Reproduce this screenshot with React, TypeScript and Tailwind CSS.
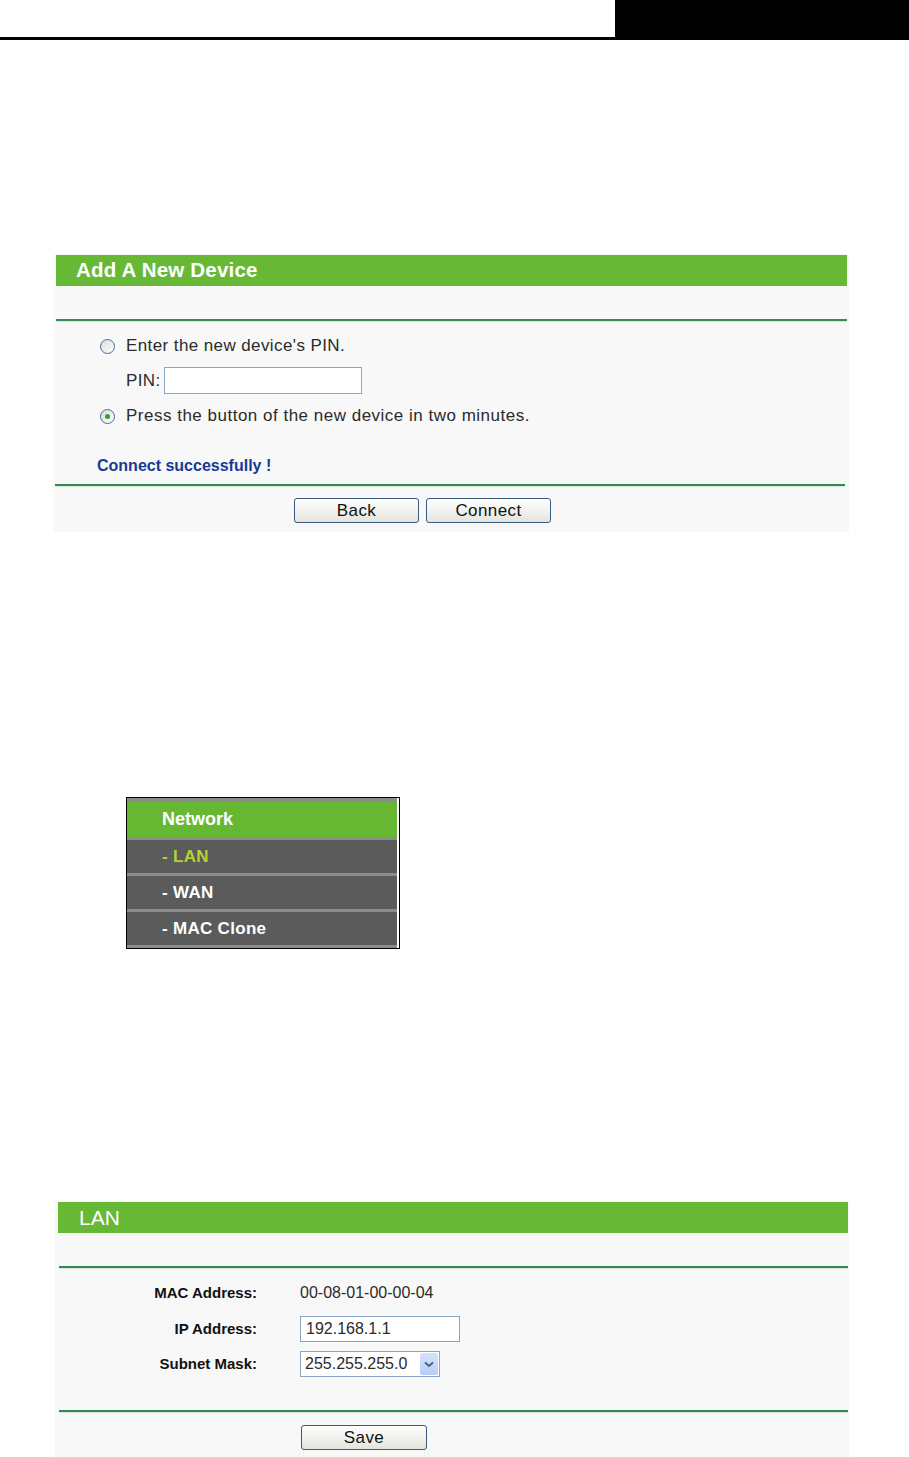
import React from "react";

const font = { fontFamily: '"Liberation Sans", Arial, sans-serif' };

function Radio({ checked }: { checked?: boolean }) {
  return (
    <span className="relative inline-flex h-[15px] w-[15px] items-center justify-center rounded-full border border-[#3f6d9e] bg-gradient-to-br from-[#dcdcd6] to-white">
      {checked && <span className="h-[5px] w-[5px] rounded-full bg-[#2aa52a]" />}
    </span>
  );
}

function Btn({ label, w }: { label: string; w: string }) {
  return (
    <div
      className={`flex h-[25px] ${w} items-center justify-center rounded-[3px] border border-[#3a5a84] bg-gradient-to-b from-white to-[#e4e4de] text-[17px] tracking-[0.4px] text-[#111]`}
    >
      {label}
    </div>
  );
}

function GreenLine({ cls }: { cls: string }) {
  return (
    <div className={cls}>
      <div className="h-[2px] bg-[#348955]" />
      <div className="h-[1px] bg-[#d5e8d8]" />
    </div>
  );
}

export default function App() {
  return (
    <div className="relative h-[1457px] w-[909px] overflow-hidden bg-white text-[#2b2b2b]" style={font}>
      {/* top bar */}
      <div className="flex h-[37px]">
        <div className="flex-1 bg-white" />
        <div className="w-[294px] bg-black" />
      </div>
      <div className="h-[3px] bg-black" />

      {/* Add A New Device panel */}
      <div className="ml-[54px] mt-[214px] w-[795px] bg-[#f8f8f8] pb-[9px] pt-[1px]">
        <div className="mx-[2px] flex h-[31px] items-center bg-[#67b835] pl-[20px] text-[20.5px] font-bold tracking-[0.2px] text-white">
          Add A New Device
        </div>
        <div className="h-[33px]" />
        <GreenLine cls="mx-[2px]" />
        <div className="ml-[46px] mt-[14px] flex h-[20px] items-center gap-[11px] text-[17px] tracking-[0.4px]">
          <Radio />
          <span>Enter the new device's PIN.</span>
        </div>
        <div className="ml-[72px] mt-[11px] flex h-[27px] items-center gap-[3px] text-[17px] tracking-[0.4px]">
          <span>PIN:</span>
          <div className="h-[27px] w-[198px] border border-[#8aa6c4] bg-white" />
        </div>
        <div className="ml-[46px] mt-[12px] flex h-[20px] items-center gap-[11px] text-[17px] tracking-[0.5px]">
          <Radio checked />
          <span>Press the button of the new device in two minutes.</span>
        </div>
        <div className="ml-[43px] mt-[30px] flex h-[20px] items-center text-[16px] font-bold text-[#193a93]">
          Connect successfully !
        </div>
        <GreenLine cls="ml-[1px] mr-[4px] mt-[8px]" />
        <div className="ml-[240px] mt-[11px] flex gap-[7px]">
          <Btn label="Back" w="w-[125px]" />
          <Btn label="Connect" w="w-[125px]" />
        </div>
      </div>

      {/* Network menu */}
      <div className="ml-[126px] mt-[265px] w-[274px] border border-black bg-white">
        <div className="mr-[2px] flex flex-col font-bold">
          <div className="h-[4px] bg-[#8c8c8c]" />
          <div className="flex h-[35px] items-center bg-[#66b833] pl-[35px] text-[18px] text-white">Network</div>
          <div className="h-[3px] bg-[#8c8c8c]" />
          <div className="flex h-[33px] items-center bg-[#5b5b5b] pl-[35px] text-[17px] tracking-[0.3px] text-[#b3d430]">- LAN</div>
          <div className="h-[3px] bg-[#8c8c8c]" />
          <div className="flex h-[33px] items-center bg-[#5b5b5b] pl-[35px] text-[17px] tracking-[0.3px] text-white">- WAN</div>
          <div className="h-[3px] bg-[#8c8c8c]" />
          <div className="flex h-[33px] items-center bg-[#5b5b5b] pl-[35px] text-[17px] tracking-[0.3px] text-white">- MAC Clone</div>
          <div className="h-[3px] bg-[#8c8c8c]" />
        </div>
      </div>

      {/* LAN panel */}
      <div className="ml-[55px] mt-[252px] w-[794px] bg-[#f8f8f8] pb-[8px] pt-[1px]">
        <div className="ml-[3px] mr-[1px] flex h-[31px] items-center bg-[#67b835] pl-[21px] text-[21px] text-white">LAN</div>
        <div className="h-[33px]" />
        <GreenLine cls="ml-[4px] mr-[1px]" />
        <div className="mt-[14px] grid grid-cols-[202px_1fr] items-center gap-x-[43px]">
          <div className="flex h-[20px] items-center justify-end text-[15px] font-bold text-[#111]">MAC Address:</div>
          <div className="flex h-[20px] items-center text-[16px]">00-08-01-00-00-04</div>

          <div className="mt-[13px] flex h-[26px] items-center justify-end text-[15px] font-bold text-[#111]">IP Address:</div>
          <div className="mt-[13px] flex h-[26px] w-[160px] items-center border border-[#8aa6c4] bg-white pl-[5px] text-[16px]">
            192.168.1.1
          </div>

          <div className="mt-[9px] flex h-[26px] items-center justify-end text-[15px] font-bold text-[#111]">Subnet Mask:</div>
          <div className="mt-[9px] flex h-[26px] w-[140px] items-center border border-[#8aa6c4] bg-white pl-[4px] text-[16px]">
            <span className="flex-1">255.255.255.0</span>
            <span className="mr-[1px] flex h-[22px] w-[18px] items-center justify-center rounded-[2px] bg-gradient-to-b from-[#d6e2fc] to-[#b8cdf8]">
              <svg width="10" height="7" viewBox="0 0 10 7">
                <path d="M1 1.5 L5 5 L9 1.5" stroke="#4d6185" strokeWidth="2" fill="none" />
              </svg>
            </span>
          </div>
        </div>
        <GreenLine cls="ml-[4px] mr-[1px] mt-[33px]" />
        <div className="ml-[246px] mt-[12px]">
          <Btn label="Save" w="w-[126px]" />
        </div>
      </div>
    </div>
  );
}
